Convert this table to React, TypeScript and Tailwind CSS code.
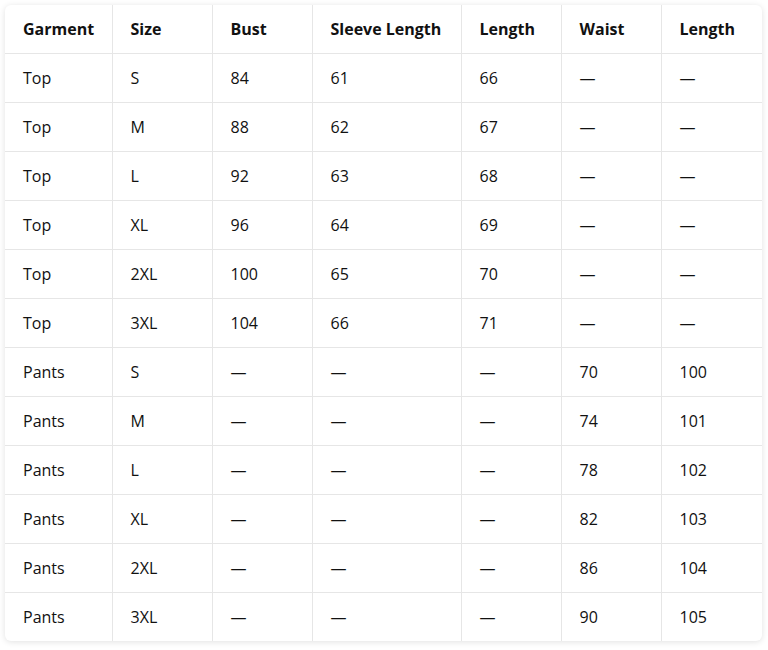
import React from "react";

type Row = {
  garment: string;
  size: string;
  bust: string;
  sleeve: string;
  length: string;
  waist: string;
  pantsLength: string;
};

const DASH = "—";

const tops: Row[] = [
  ["S", "84", "61", "66"],
  ["M", "88", "62", "67"],
  ["L", "92", "63", "68"],
  ["XL", "96", "64", "69"],
  ["2XL", "100", "65", "70"],
  ["3XL", "104", "66", "71"],
].map(([size, bust, sleeve, length]) => ({
  garment: "Top",
  size,
  bust,
  sleeve,
  length,
  waist: DASH,
  pantsLength: DASH,
}));

const pants: Row[] = [
  ["S", "70", "100"],
  ["M", "74", "101"],
  ["L", "78", "102"],
  ["XL", "82", "103"],
  ["2XL", "86", "104"],
  ["3XL", "90", "105"],
].map(([size, waist, pantsLength]) => ({
  garment: "Pants",
  size,
  bust: DASH,
  sleeve: DASH,
  length: DASH,
  waist,
  pantsLength,
}));

const rows = [...tops, ...pants];

const headers = ["Garment", "Size", "Bust", "Sleeve Length", "Length", "Waist", "Length"];

export default function App() {
  return (
    <div className="min-h-[650px] bg-white p-[5px]" style={{ fontFamily: '"Open Sans", "Noto Sans", sans-serif' }}>
      <div className="w-[757px] overflow-hidden rounded-md bg-white shadow-[0_1px_6px_rgba(0,0,0,0.12)]">
        <table className="w-full table-fixed border-collapse text-[16px] text-[#111]">
          <colgroup>
            <col className="w-[107px]" />
            <col className="w-[100px]" />
            <col className="w-[100px]" />
            <col className="w-[149px]" />
            <col className="w-[100px]" />
            <col className="w-[100px]" />
            <col className="w-[101px]" />
          </colgroup>
          <thead>
            <tr className="h-[48px]">
              {headers.map((h, i) => (
                <th
                  key={i}
                  className="border-l border-[#e6e6e6] px-[18px] text-left font-bold first:border-l-0"
                >
                  {h}
                </th>
              ))}
            </tr>
          </thead>
          <tbody>
            {rows.map((r, idx) => (
              <tr key={idx} className="h-[49px] border-t border-[#e6e6e6]">
                {[r.garment, r.size, r.bust, r.sleeve, r.length, r.waist, r.pantsLength].map((v, i) => (
                  <td key={i} className="border-l border-[#e6e6e6] px-[18px] first:border-l-0">
                    {v}
                  </td>
                ))}
              </tr>
            ))}
          </tbody>
        </table>
      </div>
    </div>
  );
}
